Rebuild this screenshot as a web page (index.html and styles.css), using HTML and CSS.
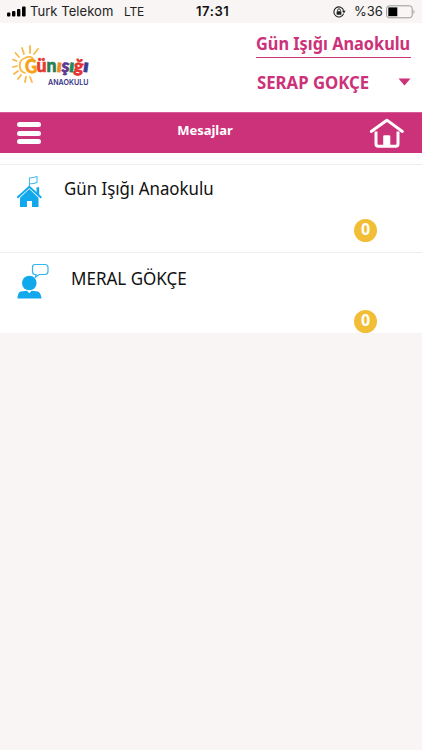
FILE: index.html
```html
<!DOCTYPE html>
<html lang="tr">
<head>
<meta charset="utf-8">
<title>Mesajlar</title>
<link rel="stylesheet" href="styles.css">
</head>
<body>
<div class="status">
  <svg class="signal" width="19" height="11" viewBox="0 0 19 11"><rect x="0" y="6.5" width="3.4" height="4" rx="1"/><rect x="5" y="5" width="3.4" height="5.5" rx="1"/><rect x="10" y="3" width="3.4" height="7.5" rx="1"/><rect x="15" y="0.5" width="3.6" height="10" rx="1"/></svg>
  <span class="carrier">Turk Telekom</span>
  <span class="network">LTE</span>
  <span class="time">17:31</span>
  <svg class="lock" width="13" height="12" viewBox="0 0 13 12"><path d="M10.6 7.6A5 5 0 1 1 10.7 4.6" fill="none" stroke="#222" stroke-width="1.1"/><path d="M8.9 4.7h3.8L11 7.3z" fill="#222"/><rect x="3.6" y="5.2" width="4.8" height="3.6" rx=".5" fill="#222"/><path d="M4.6 5.4V4.2a1.4 1.4 0 0 1 2.8 0v1.2" fill="none" stroke="#222" stroke-width=".9"/></svg>
  <span class="percent">%36</span>
  <svg class="battery" width="30" height="14" viewBox="0 0 30 14"><rect x=".6" y=".8" width="25.6" height="12" rx="2.6" fill="none" stroke="#999" stroke-width="1"/><rect x="2.3" y="2.4" width="9" height="8.8" fill="#000"/><path d="M27.5 4.7q2 2.1 0 4.2z" fill="#999"/></svg>
</div>
<header class="header">
  <svg class="logo" width="80" height="46" viewBox="0 0 80 46">
    <g fill="none" stroke="#f9b947" stroke-width="1.8" stroke-linecap="round">
      <path d="M13 29C6 27 6 16 13 14C17 12 20 13 21 15"/>
      <path d="M7 13L3.500 9M12 10L10 4M18 9L18 2M22 10L26 5M4.500 17L1 15.500M5 22L1 23M6 27L2 30M9 31L6 35M14 33L13 38M18 33L20 38"/>
    </g>
    <g class="logo-word">
      <text x="13" y="29" fill="#f7a11b" stroke="#f7a11b" font-size="19" textLength="12" lengthAdjust="spacingAndGlyphs" transform="rotate(-4 19 22)">G</text>
      <text x="24.500" y="28" fill="#e6392f" stroke="#e6392f" textLength="10" lengthAdjust="spacingAndGlyphs">ü</text>
      <text x="34.500" y="28" fill="#287d55" stroke="#287d55" textLength="10" lengthAdjust="spacingAndGlyphs">n</text>
      <text x="44.500" y="28" fill="#f18a23" stroke="#f18a23" textLength="5.500" lengthAdjust="spacingAndGlyphs" transform="rotate(6 47 23)">ı</text>
      <text x="49.500" y="28" fill="#5b3992" stroke="#5b3992" textLength="8" lengthAdjust="spacingAndGlyphs" transform="rotate(6 53 23)">ş</text>
      <text x="57" y="28" fill="#218953" stroke="#218953" textLength="5.500" lengthAdjust="spacingAndGlyphs" transform="rotate(6 60 23)">ı</text>
      <text x="62" y="28" fill="#e5322e" stroke="#e5322e" textLength="9.500" lengthAdjust="spacingAndGlyphs" transform="rotate(8 66 23)">ğ</text>
      <text x="71" y="28" fill="#3d3b91" stroke="#3d3b91" textLength="6" lengthAdjust="spacingAndGlyphs" transform="rotate(8 74 23)">ı</text>
    </g>
    <text class="logo-sub" x="36" y="41" textLength="40.5" lengthAdjust="spacingAndGlyphs">ANAOKULU</text>
  </svg>
  <div class="account">
    <div class="school"><span class="school-name">Gün Işığı Anaokulu</span></div>
    <div class="user"><span class="user-name">SERAP GOKÇE</span><svg width="13" height="8" viewBox="0 0 13 8"><path d="M.5.5h12L6.5 7.5z" fill="#cc3279"/></svg></div>
  </div>
</header>
<nav class="nav">
  <div class="menu"><i></i><i></i><i></i></div>
  <h1 class="title">Mesajlar</h1>
  <svg class="home" width="36" height="31" viewBox="0 0 36 31" fill="none" stroke="#fff"><path d="M2.2 13.500L17.900 2.200L33.400 13.500" stroke-width="2.9" stroke-linecap="round" stroke-linejoin="round"/><path d="M7 13.5V26q0 2.300 2.300 2.300h17.400q2.300 0 2.300-2.300V13.5" stroke-width="3"/><path d="M14.2 29V18.500q0-1.3 1.3-1.3h4.500q1.3 0 1.3 1.3v10.500z" fill="#fff" stroke="none"/></svg>
</nav>
<main class="list">
  <section class="row">
    <svg class="icon" width="28" height="34" viewBox="0 0 28 34"><path d="M13.500 13V2.500M13.500 2.800Q17 3 21 1.500V7.500Q17 9 13.500 8.600" fill="none" stroke="#4abcf0" stroke-width="1.100"/><path d="M1.300 22.800L13.300 11.800L25.300 22.800" fill="none" stroke="#12a8ec" stroke-width="2"/><path d="M20.500 12.300h2.700v8l-2.700-2.500zM4 22.800L13.300 14L22.500 22.800V32H16V26H11V32H4z" fill="#12a8ec"/></svg>
    <span class="name name-school">Gün Işığı Anaokulu</span>
    <span class="badge">0</span>
  </section>
  <section class="row row-person">
    <svg class="icon" width="34" height="38" viewBox="0 0 34 38"><path d="M19 1.500h10q3 0 3 3v4q0 3-3 3h-6l-3.500 2.800.5-2.800h-1q-2.500 0-2.500-3v-4q0-3 2.500-3z" fill="#fff" stroke="#35b5f0" stroke-width="1.200"/><circle cx="13.300" cy="20" r="7.300" fill="#12a8ec"/><path d="M1.500 35.500q.2-6 3-7l6.500-.7 2.300 2.400 2.300-2.400 6.200.7q3 1 3.700 7z" fill="#12a8ec"/></svg>
    <span class="name name-person">MERAL GÖKÇE</span>
    <span class="badge">0</span>
  </section>
</main>
</body>
</html>
```
FILE: styles.css
```css
* { box-sizing: border-box; }
body { margin: 0; background: #f8f5f4; font-family: "Noto Sans", "Open Sans", sans-serif; color: #111; }
svg { display: block; flex: none; }
span { white-space: nowrap; }

.status { display: flex; height: 23px; padding: 0 0 0 7px; align-items: center; font: 13px/23px Inter, "Liberation Sans", sans-serif; color: #222; }
.carrier { width: 95px; padding-left: 4px; letter-spacing: .05px; }
.network { width: 75px; padding-left: 3px; font-size: 12px; letter-spacing: -.2px; }
.time { width: 137px; font-weight: 600; color: #111; letter-spacing: .6px; }
.lock { margin-right: 8px; }
.percent { width: 32px; }

.header { display: flex; height: 89px; background: #fff; padding: 0 11px 0 12px; justify-content: space-between; }
.logo { margin-top: 21px; }
.logo-word { font: 900 18px Lato, "Noto Sans", sans-serif; stroke-width: .6px; }
.logo-sub { font: 600 8px Inter, sans-serif; fill: #38368b; }
.account { width: 155px; color: #cc3279; font-weight: 700; }
.school { height: 35px; border-bottom: 1px solid #cc3279; line-height: 42px; font-size: 17px; }
.school-name, .user-name, .name, .title { transform-origin: 0 50%; }
.school-name { display: inline-block; transform: scaleX(.96); }
.user { display: flex; justify-content: space-between; align-items: center; height: 48px; padding-left: 1px; font-size: 17px; }
.user-name { transform: scaleX(.985); }

.nav { display: flex; height: 41px; padding: 0 17px; background: #cc3279; border-top: 1px solid #d75b94; justify-content: space-between; }
.menu { display: flex; flex-direction: column; gap: 3.500px; width: 24px; padding-top: 9px; }
.menu i { width: 24px; height: 5px; border-radius: 2.500px; background: #fff; }
.title { margin: 0; font-size: 13px; line-height: 35px; color: #fff; }
.home { margin-top: 5px; }

.list { height: 180px; background: #fff; padding-top: 11px; }
.row { display: flex; height: 88px; border-top: 1px solid #ededed; padding: 10px 45px 0 16px; }
.row-person { height: 81px; }
.name { color: #111; font-size: 17.500px; line-height: 27px; }
.name-school { margin-left: 20px; transform: scaleX(.963); }
.name-person { margin-left: 21px; margin-top: 2px; transform: scaleX(.972); }
.badge { width: 23px; height: 23px; margin: 44px 0 0 auto; border-radius: 50%; background: #f2be35; color: #fff; text-align: center; font-weight: 700; font-size: 16px; line-height: 21px; }
.row-person .badge { margin-top: 47px; }
```
